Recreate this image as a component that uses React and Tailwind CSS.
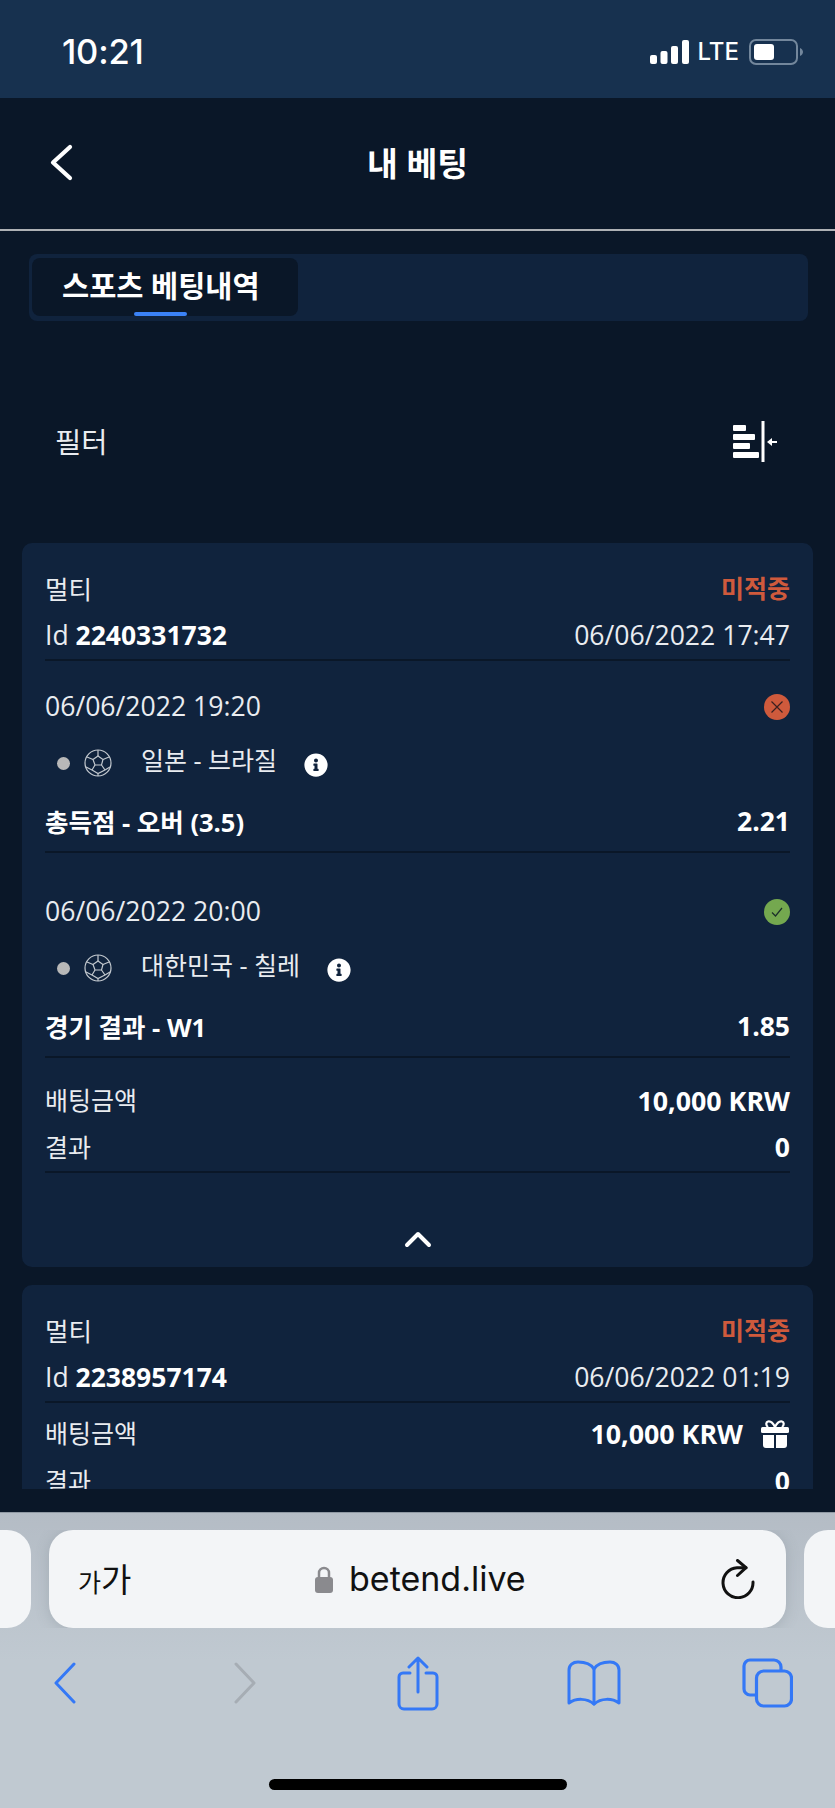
import React from "react";
import { FaInfoCircle } from "react-icons/fa";

const Ball = () => (
  <svg width="28" height="28" viewBox="0 0 28 28" fill="none" stroke="#c3c9cf" strokeWidth="1.2" className="shrink-0">
    <circle cx="14" cy="14" r="13" />
    <path d="M14 7l5 3.500-1.500 5.500H11l-2-5.500z" />
    <path d="M14 7V1M19 10.500l6-2.500M17.500 16l3.500 5M11 16l-3 5M9 10.500L3 8" />
    <path d="M8 21l6 3.500L21 21M14 24.500V27M21 21l5-3M8 21l-6-3" />
  </svg>
);

const Gift = () => (
  <svg width="28" height="28" viewBox="0 0 28 28" className="ml-[18px] mr-[1px] shrink-0">
    <path d="M14 7C12 3 9 1 7 1.500S4.500 5 7 7M14 7c2-4 5-6 7-5.500S23.500 5 21 7" fill="none" stroke="#fff" strokeWidth="2.200" />
    <rect x="0" y="7" width="28" height="6" rx="1.500" fill="#fff" />
    <path d="M2 15h11v13H5a3 3 0 0 1-3-3zM15 15h11v10a3 3 0 0 1-3 3h-8z" fill="#fff" />
  </svg>
);

const Row = ({ className = "", children }) => (
  <div className={"flex items-center justify-between " + className}>{children}</div>
);

const Selection = ({ date, team, market, odd, won, textW, first }) => (
  <div className={(first ? "pt-[20px] " : "pt-[33px] ") + "border-b-2 border-[#0a1728]"}>
    <Row className="h-[52px]">
      <span className="text-[26.6px]">{date}</span>
      <span className={"flex h-[26px] w-[26px] items-center justify-center rounded-full " + (won ? "bg-[#74a84f]" : "bg-[#cf5a3c]")}>
        {won ? (
          <svg width="16" height="16" viewBox="0 0 16 16" fill="none" stroke="#1b2f2a" strokeWidth="1.2"><path d="M3 8.500l3.500 3.500L13 4" /></svg>
        ) : (
          <svg width="16" height="16" viewBox="0 0 16 16" fill="none" stroke="#3a2020" strokeWidth="1.2"><path d="M2.500 2.500l11 11M13.500 2.500l-11 11" /></svg>
        )}
      </span>
    </Row>
    <div className="flex h-[60px] items-center pl-[12px]">
      <span className="h-[13px] w-[13px] shrink-0 rounded-full bg-[#b8b8b8]" />
      <span className="ml-[14px]"><Ball /></span>
      <span className={"ml-[29px] -mt-[5px] text-[25px] leading-none " + textW}>{team}</span>
      <FaInfoCircle className="mt-[4px] shrink-0 text-[24px] text-white" />
    </div>
    <Row className="h-[58px] font-bold text-white">
      <span className="text-[25.5px]">{market}</span>
      <span>{odd}</span>
    </Row>
  </div>
);

export default function App() {
  return (
    <div
      className="flex h-[1808px] w-[835px] flex-col overflow-hidden bg-[#0a1728] text-[26.5px] text-[#e9ecf0]"
      style={{ fontFamily: '"Open Sans", "Noto Sans CJK KR", sans-serif' }}
    >
      {/* status bar */}
      <div className="flex h-[98px] shrink-0 items-center justify-between bg-[#17314f] pl-[62px] pr-[32px] pt-[6px]">
        <span className="text-[34.5px] font-medium tracking-[-0.2px] text-white" style={{ fontFamily: "Inter, sans-serif" }}>10:21</span>
        <div className="flex items-center">
          <svg width="40" height="24" viewBox="0 0 40 24" fill="#fff">
            <rect x="0" y="15" width="7" height="9" rx="2" />
            <rect x="10.500" y="11" width="7" height="13" rx="2" />
            <rect x="21" y="6" width="7" height="18" rx="2" />
            <rect x="32" y="0" width="7" height="24" rx="2" />
          </svg>
          <span className="ml-[8px] text-[24px] font-medium leading-none text-white" style={{ fontFamily: "Inter, sans-serif" }}>LTE</span>
          <svg className="ml-[10px]" width="54" height="26" viewBox="0 0 54 26" fill="none">
            <rect x="1" y="1" width="47" height="24" rx="6" stroke="#73879c" strokeWidth="2" />
            <rect x="5" y="5" width="20" height="16" rx="3" fill="#fff" />
            <path d="M51 9c2 1 3 2.500 3 4s-1 3-3 4z" fill="#73879c" />
          </svg>
        </div>
      </div>

      {/* header */}
      <div className="relative flex h-[133px] shrink-0 items-center justify-center border-b-2 border-[#aeb1b5] pb-[2px]">
        <svg className="absolute left-[50px] top-[46px]" width="23" height="37" viewBox="0 0 23 37" fill="none" stroke="#fff" strokeWidth="4.200" strokeLinecap="round" strokeLinejoin="round">
          <path d="M20 3L3 18.500 20 34" />
        </svg>
        <span className="mt-[2px] text-[33.5px] font-bold text-white">내 베팅</span>
      </div>

      {/* tabs */}
      <div className="ml-[29px] mr-[27px] mt-[23px] h-[67px] shrink-0 rounded-[8px] bg-[#10233d] pl-[3px] pt-[4px]">
        <div className="relative flex h-[58px] w-[266px] items-center rounded-[8px] bg-[#0a1728] pb-[2px] pl-[30px]">
          <span className="text-[29.5px] font-bold leading-none text-white">스포츠 베팅내역</span>
          <span className="absolute bottom-0 left-[102px] h-[4px] w-[53px] rounded-[2px] bg-[#3b82f6]" />
        </div>
      </div>

      {/* filter */}
      <div className="mt-[81px] flex h-[80px] shrink-0 items-center justify-between pl-[55px] pr-[58px]">
        <span className="text-[28.5px] font-normal text-[#e9ecf0]">필터</span>
        <svg width="44" height="42" viewBox="0 0 44 42" fill="#fff">
          <rect x="0" y="4" width="13" height="6" rx="1" />
          <rect x="0" y="13" width="22" height="6" rx="1" />
          <rect x="0" y="22" width="17" height="6" rx="1" />
          <rect x="0" y="31" width="26" height="6" rx="1" />
          <rect x="28.500" y="0" width="3" height="41" />
          <path d="M34 21l5-4v3h5v2h-5v3z" />
        </svg>
      </div>

      {/* list */}
      <div className="mx-[22px] mt-[61px] h-[946px] shrink-0 overflow-hidden">
        <div className="h-[724px] rounded-[10px] bg-[#10233d] px-[23px] pt-[22px]">
          <Row className="h-[48px]">
            <span className="text-[25.5px]">멀티</span>
            <span className="text-[25px] font-bold text-[#cf5a3c]">미적중</span>
          </Row>
          <Row className="h-[48px] border-b-2 border-[#0a1728]">
            <span>Id <b className="text-white">2240331732</b></span>
            <span className="text-[26.6px]">06/06/2022 17:47</span>
          </Row>
          <Selection first date="06/06/2022 19:20" team="일본 - 브라질" market="총득점 - 오버 (3.5)" odd="2.21" won={false} textW="w-[163px]" />
          <Selection date="06/06/2022 20:00" team="대한민국 - 칠레" market="경기 결과 - W1" odd="1.85" won textW="w-[186px]" />
          <Row className="mt-[19px] h-[48px]">
            <span className="text-[25px]">배팅금액</span>
            <b className="text-[26.8px] text-white">10,000 KRW</b>
          </Row>
          <Row className="h-[48px] border-b-2 border-[#0a1728]">
            <span className="text-[25px]">결과</span>
            <b className="text-white">0</b>
          </Row>
          <div className="flex justify-center pt-[58px]">
            <svg width="28" height="17" viewBox="0 0 28 17" fill="none" stroke="#fff" strokeWidth="4" strokeLinecap="round" strokeLinejoin="round">
              <path d="M3 14L14 3l11 11" />
            </svg>
          </div>
        </div>
        <div className="mt-[18px] h-[260px] rounded-t-[10px] bg-[#10233d] px-[23px] pt-[22px]">
          <Row className="h-[48px]">
            <span className="text-[25.5px]">멀티</span>
            <span className="text-[25px] font-bold text-[#cf5a3c]">미적중</span>
          </Row>
          <Row className="h-[48px] border-b-2 border-[#0a1728]">
            <span>Id <b className="text-white">2238957174</b></span>
            <span className="text-[26.6px]">06/06/2022 01:19</span>
          </Row>
          <Row className="mt-[7px] h-[48px]">
            <span className="text-[25px]">배팅금액</span>
            <span className="flex items-center">
              <b className="text-[26.8px] text-white">10,000 KRW</b>
              <Gift />
            </span>
          </Row>
          <Row className="h-[48px]">
            <span className="text-[25px]">결과</span>
            <b className="text-white">0</b>
          </Row>
        </div>
      </div>

      {/* browser chrome */}
      <div className="mt-[23px] h-[296px] shrink-0 border-t border-[#8f99a3] bg-gradient-to-b from-[#b4bcc5] to-[#c0c9d1] to-50% pt-[17px]">
        <div className="flex h-[98px] gap-[18px] overflow-hidden">
          <div className="h-full w-[31px] shrink-0 rounded-r-[24px] bg-[#f3f5f7]" />
          <div className="flex h-full w-[737px] shrink-0 items-center rounded-[24px] bg-[#f3f5f7] pl-[29px] pr-[31px] shadow-[0_2px_14px_rgba(100,110,120,0.25)]">
            <span className="flex w-[237px] items-baseline text-[#111]" style={{ fontFamily: '"Noto Sans CJK KR", sans-serif' }}>
              <span className="text-[25px]">가</span><span className="text-[33px]">가</span>
            </span>
            <svg width="18" height="27" viewBox="0 0 18 27" fill="none">
              <path d="M4 12V7a5 5 0 0 1 10 0v5" stroke="#8a8a8e" strokeWidth="2.500" />
              <rect x="0" y="11" width="18" height="16" rx="3" fill="#8a8a8e" />
            </svg>
            <span className="ml-[16px] flex-1 text-[34px] leading-none text-[#111]" style={{ fontFamily: "Inter, sans-serif" }}>betend.live</span>
            <svg width="34" height="40" viewBox="0 0 34 40" fill="none" stroke="#111" strokeWidth="3" strokeLinecap="round" strokeLinejoin="round">
              <path d="M25 8.700H16A15 15 0 1 0 32 23" />
              <path d="M16.500 1.500L25 8.700 16.500 16.500" />
            </svg>
          </div>
          <div className="h-full flex-1 rounded-l-[24px] bg-[#f3f5f7]" />
        </div>

        <div className="mt-[27px] flex h-[56px] items-center justify-between px-[35px]">
          <div className="flex w-[60px] justify-center">
            <svg width="24" height="42" viewBox="0 0 24 42" fill="none" stroke="#3478f6" strokeWidth="3" strokeLinecap="round" strokeLinejoin="round"><path d="M21 2L3 21l18 19" /></svg>
          </div>
          <div className="flex w-[60px] justify-center pl-[8px]">
            <svg width="24" height="42" viewBox="0 0 24 42" fill="none" stroke="#a6adb4" strokeWidth="3" strokeLinecap="round" strokeLinejoin="round"><path d="M3 2l18 19L3 40" /></svg>
          </div>
          <div className="flex w-[60px] justify-center">
            <svg width="42" height="55" viewBox="0 0 42 55" fill="none" stroke="#3478f6" strokeWidth="3" strokeLinecap="round" strokeLinejoin="round">
              <path d="M21 36V2M12 11l9-9 9 9" />
              <path d="M13 17H6a4 4 0 0 0-4 4v27a5 5 0 0 0 5 5h28a5 5 0 0 0 5-5V21a4 4 0 0 0-4-4h-7" />
            </svg>
          </div>
          <div className="flex w-[60px] justify-center">
            <svg width="54" height="46" viewBox="0 0 54 46" fill="none" stroke="#3478f6" strokeWidth="3" strokeLinecap="round" strokeLinejoin="round">
              <path d="M27 9C24 4 18 2 11 2 6 2 2 5 2 10v33c7-5 18-5 25 1 7-6 18-6 25-1V10c0-5-4-8-9-8-7 0-13 2-16 7z" />
              <path d="M27 9v35" />
            </svg>
          </div>
          <div className="flex w-[60px] justify-center pr-[5px]">
            <svg width="51" height="50" viewBox="0 0 51 50" fill="none" stroke="#3478f6" strokeWidth="3.200" strokeLinejoin="round">
              <path d="M14 37H8a6 6 0 0 1-6-6V8a6 6 0 0 1 6-6h24a7 7 0 0 1 7 7v4" />
              <rect x="14.500" y="13" width="35" height="35" rx="7" />
            </svg>
          </div>
        </div>

        <div className="mt-[68px] flex justify-center">
          <div className="h-[11px] w-[298px] rounded-full bg-black" />
        </div>
      </div>
    </div>
  );
}
